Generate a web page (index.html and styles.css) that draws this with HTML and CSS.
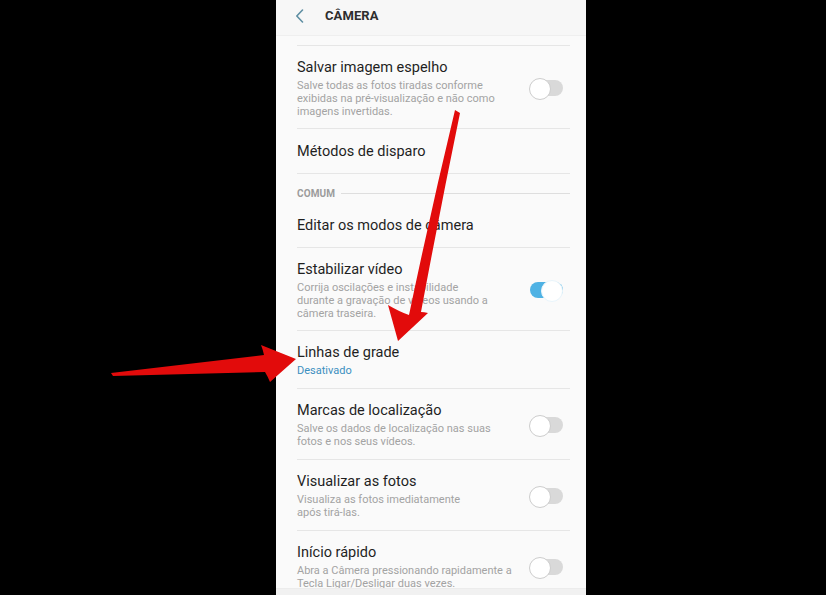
FILE: index.html
```html
<!DOCTYPE html>
<html lang="pt-BR">
<head>
<meta charset="utf-8">
<title>Câmera</title>
<link rel="stylesheet" href="styles.css">
</head>
<body>
<div class="stage">
  <div class="phone">
    <header class="appbar">
      <svg class="back" width="10" height="14" viewBox="0 0 10 14"><path d="M7.5 1 L1.8 7 L7.5 13" fill="none" stroke="#5f8fa3" stroke-width="1.6" stroke-linecap="round" stroke-linejoin="round"/></svg>
      <h1 class="appbar-title">CÂMERA</h1>
    </header>
    <div class="list">
      <div class="row cut"></div>
      <div class="row row-three">
        <div class="text">
          <div class="title">Salvar imagem espelho</div>
          <div class="sub">Salve todas as fotos tiradas conforme<br>exibidas na pré-visualização e não como<br>imagens invertidas.</div>
        </div>
        <span class="switch"></span>
      </div>
      <div class="row row-single">
        <div class="text"><div class="title">Métodos de disparo</div></div>
      </div>
      <div class="section"><span class="section-label">COMUM</span><span class="section-line"></span></div>
      <div class="row">
        <div class="text"><div class="title">Editar os modos de câmera</div></div>
      </div>
      <div class="row row-three">
        <div class="text">
          <div class="title">Estabilizar vídeo</div>
          <div class="sub">Corrija oscilações e instabilidade<br>durante a gravação de vídeos usando a<br>câmera traseira.</div>
        </div>
        <span class="switch on"></span>
      </div>
      <div class="row">
        <div class="text">
          <div class="title">Linhas de grade</div>
          <div class="value">Desativado</div>
        </div>
      </div>
      <div class="row">
        <div class="text">
          <div class="title">Marcas de localização</div>
          <div class="sub">Salve os dados de localização nas suas<br>fotos e nos seus vídeos.</div>
        </div>
        <span class="switch"></span>
      </div>
      <div class="row">
        <div class="text">
          <div class="title">Visualizar as fotos</div>
          <div class="sub">Visualiza as fotos imediatamente<br>após tirá-las.</div>
        </div>
        <span class="switch"></span>
      </div>
      <div class="row">
        <div class="text">
          <div class="title">Início rápido</div>
          <div class="sub">Abra a Câmera pressionando rapidamente a<br>Tecla Ligar/Desligar duas vezes.</div>
        </div>
        <span class="switch"></span>
      </div>
    </div>
    <div class="navbar"></div>
  </div>
  <svg class="arrows" width="826" height="595" viewBox="0 0 826 595">
    <path fill="#e20b0b" d="M455 110 L460 113 Q440 210 421 312 Q424 312 428 313 L398 341 L388 305 Q400 312 409 315 Q431 210 455 110 Z"/>
    <path fill="#e20b0b" d="M111 373 L264 355 Q263 350 261 345 L296 359 L270 382 Q268 377 265 372 L113 376 Z"/>
  </svg>
</div>
</body>
</html>
```

FILE: styles.css
```css
* { box-sizing: border-box; }

html, body {
  margin: 0;
  padding: 0;
  background: #000;
}

.stage {
  position: relative;
  width: 826px;
  height: 595px;
  padding-left: 276px;
  overflow: hidden;
  font-family: Roboto, "Noto Sans", "Liberation Sans", sans-serif;
}

.phone {
  width: 310px;
  height: 595px;
  background: #fafafa;
  display: flex;
  flex-direction: column;
}

.appbar {
  height: 36px;
  flex: none;
  display: flex;
  align-items: center;
  background: #f7f7f7;
  border-bottom: 1px solid #efefef;
  padding-left: 19px;
}

.back {
  display: block;
  margin-top: -4px;
}

.appbar-title {
  margin: -4px 0 0 20px;
  font-size: 13px;
  font-weight: 700;
  color: #2e2e2e;
  letter-spacing: 0.1px;
}

.list {
  flex: 1;
  overflow: hidden;
}

.row {
  display: flex;
  align-items: center;
  margin: 0 16px 0 21px;
  padding: 12px 0 11px;
  border-bottom: 1px solid #e6e6e6;
}

.row.cut {
  height: 10px;
  padding: 0;
}

.row-three { padding-bottom: 10px; }
.row-single { padding-top: 13px; }

.text {
  flex: 1;
  min-width: 0;
}

.title {
  font-size: 14.5px;
  line-height: 20px;
  color: #1f1f1f;
  white-space: nowrap;
}

.sub {
  margin-top: 1px;
  font-size: 11px;
  line-height: 13px;
  color: #a3a3a3;
  white-space: nowrap;
}

.value {
  margin-top: 1px;
  font-size: 11px;
  line-height: 13px;
  color: #3b8fc0;
}

.section {
  display: flex;
  align-items: center;
  margin: 0 16px 0 21px;
  padding: 14px 0 5px;
  height: 30px;
}

.section-label {
  font-size: 10px;
  line-height: 12px;
  font-weight: 700;
  color: #9c9c9c;
  letter-spacing: 0.1px;
}

.section-line {
  flex: 1;
  height: 1px;
  background: #dedede;
  margin-left: 6px;
}

.switch {
  position: relative;
  flex: none;
  width: 34px;
  height: 20px;
  margin-right: 7px;
}

.switch::before {
  content: "";
  position: absolute;
  left: 1px;
  right: 0;
  top: 2px;
  height: 16px;
  border-radius: 8px;
  background: #d9d9d9;
}

.switch::after {
  content: "";
  position: absolute;
  left: 0;
  top: 0;
  width: 20px;
  height: 20px;
  border-radius: 50%;
  background: #fff;
  border: 1.5px solid #cdcdcd;
}

.switch.on::before {
  background: #4fb2e4;
}

.switch.on::after {
  left: auto;
  right: 0;
  border-color: #e9f5fb;
}

.navbar {
  height: 7px;
  flex: none;
  background: #f1f1f1;
  border-top: 1px solid #ececec;
}

.arrows {
  position: absolute;
  left: 0;
  top: 0;
  pointer-events: none;
}
```
